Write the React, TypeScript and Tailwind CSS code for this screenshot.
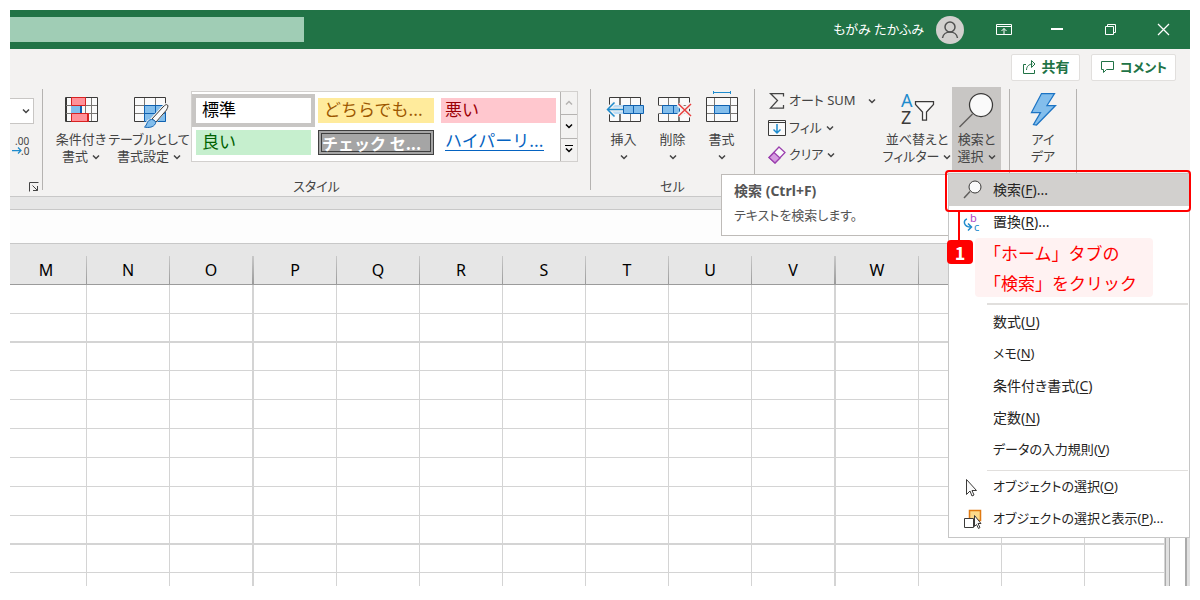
import React from 'react';
import clsx from 'clsx';

const COLUMNS = [
  { name: 'M', col: 'w-[77px]', thick: false },
  { name: 'N', col: 'w-[83px]', thick: false },
  { name: 'O', col: 'w-[84px]', thick: true },
  { name: 'P', col: 'w-[83px]', thick: false },
  { name: 'Q', col: 'w-[83px]', thick: false },
  { name: 'R', col: 'w-[83px]', thick: false },
  { name: 'S', col: 'w-[83px]', thick: false },
  { name: 'T', col: 'w-[83px]', thick: false },
  { name: 'U', col: 'w-[83px]', thick: false },
  { name: 'V', col: 'w-[84px]', thick: true },
  { name: 'W', col: 'w-[83px]', thick: false },
  { name: '', col: 'w-[83px]', thick: false },
  { name: '', col: 'w-[83px]', thick: false },
  { name: '', col: '', thick: false },
];

const ROWS = [
  { height: 'h-[29px]', thick: false },
  { height: 'h-[29px]', thick: true },
  { height: 'h-[28px]', thick: false },
  { height: 'h-[29px]', thick: false },
  { height: 'h-[29px]', thick: false },
  { height: 'h-[29px]', thick: false },
  { height: 'h-[29px]', thick: false },
  { height: 'h-[29px]', thick: false },
  { height: 'h-[29px]', thick: true },
  { height: 'h-[28px]', thick: false },
  { height: 'h-[29px]', thick: false },
];

function Chevron({ className }: { className?: string }) {
  return (
    <svg className={clsx('inline-block h-2 w-2 shrink-0', className)} viewBox="0 0 8 8" fill="none" stroke="currentColor" strokeWidth="1.5">
      <path d="M1 2.5 4 5.5 7 2.5" />
    </svg>
  );
}

function Separator() {
  return <div className="mt-1 mb-1.5 w-px shrink-0 bg-[#b5b3b1]" />;
}

function GroupLabel({ children }: { children?: React.ReactNode }) {
  return <div className="text-center text-[13px] leading-5">{children}</div>;
}

interface RibbonButtonProps {
  icon: React.ReactNode;
  first: string;
  second?: string;
  arrow?: boolean;
  className?: string;
}

function RibbonButton({ icon, first, second, arrow = true, className }: RibbonButtonProps) {
  return (
    <button className={clsx('flex h-[84px] shrink-0 flex-col items-center text-[13px] leading-[17px] whitespace-nowrap', className)}>
      <svg className="h-11 w-11 shrink-0" viewBox="0 0 44 44" fill="none">
        {icon}
      </svg>
      <span>{first}</span>
      <span className="flex h-[17px] items-center gap-1">
        {second}
        {arrow && <Chevron />}
      </span>
    </button>
  );
}

const conditionalIcon = (
  <>
    <path d="M6.5 10.5h32v24h-32z" fill="#fafafa" stroke="#3b3a39" />
    <path d="M7.5 10v25" stroke="#3b3a39" />
    <path d="M7 18.5h31M7 26.5h31M26.5 11v23M32.5 11v23" stroke="#797774" />
    <path d="M12.5 10.5h14v8h-14z" fill="#ff9199" stroke="#d92121" />
    <path d="M12.5 26.5h17v8h-17z" fill="#ff9199" stroke="#d92121" />
    <path d="M12 19h10v7H12z" fill="#83beec" />
    <path d="M22 19v7" stroke="#0f61b0" strokeWidth="2" />
    <path d="M29 27v7" stroke="#d92121" strokeWidth="2" />
  </>
);

const tableIcon = (
  <>
    <path d="M7.5 10.5h31v24h-31z" fill="#fafafa" stroke="#3b3a39" />
    <path d="M17 18h22v17H17z" fill="#83beec" />
    <path d="M8 18.5h30M8 26.5h10M17.5 11v24M28.5 11v8" stroke="#797774" />
    <path d="M17.5 34.5v-16h21v16zM28.5 18v16M18 26.5h20" stroke="#0f61b0" />
    <path d="M40 16c2 1 2 4 0 7L30 35c-2 5-7 7-14 6 2-2 2-8 7-9L36 18c2-2 3-2 4-2z" fill="#f3f2f1" />
    <path d="M40.5 18c1 1 0 3-1 5L29 35l-4-3 11-12c2-2 3.5-3 4.5-2z" fill="#fafafa" stroke="#3b3a39" />
    <path d="M24.5 32.5c2 0 5 2 4 4-2 4-7 4.5-11 3.5 3-2 2-7 7-7.5z" fill="#83beec" stroke="#0f61b0" />
  </>
);

const insertIcon = (
  <>
    <path d="M7.5 10.5h31v24h-31z" fill="#fafafa" stroke="#3b3a39" />
    <path d="M18 11v23" stroke="#797774" strokeWidth="2" />
    <path d="M28.5 11v23" stroke="#797774" />
    <path d="M8 18h14v9H8z" fill="#bcdcf5" />
    <path d="M21.5 18.5h20v8h-20zM31.5 18v8" fill="#83beec" stroke="#0f61b0" />
    <path d="M5.5 22.5H21M12.5 15.5l-7 7 7 7" stroke="#f3f2f1" strokeWidth="4" />
    <path d="M5.5 22.5H21M12.5 15.5l-7 7 7 7" stroke="#1e8bcd" strokeWidth="1.5" />
  </>
);

const deleteIcon = (
  <>
    <path d="M7.5 18.5v-8h31v24h-31v-8" fill="#fafafa" stroke="#3b3a39" />
    <path d="M7 19h5v7H7z" fill="#f3f2f1" />
    <path d="M8 18.5h30M8 26.5h30M17.5 11v7M17.5 27v7" stroke="#797774" />
    <path d="M28 11v23" stroke="#797774" strokeWidth="2" />
    <path d="M11.5 18.5h17v8h-17zM22.5 18v8" fill="#83beec" stroke="#0f61b0" />
    <path d="M27.5 17l12.5 12M40 17 27.5 29" stroke="#f3f2f1" strokeWidth="5" />
    <path d="M27.5 17l12.5 12M40 17 27.5 29" stroke="#e8403f" strokeWidth="1.5" />
  </>
);

const formatIcon = (
  <>
    <path d="M6.5 10.5h31v24h-31z" fill="#fafafa" stroke="#3b3a39" />
    <path d="M7 18.5h30M7 26.5h30M14.5 11v23M30.5 11v23" stroke="#797774" />
    <path d="M14.5 18.5h15v8h-15z" fill="#83beec" stroke="#0f61b0" />
    <path d="M13.5 5.5h17M13.5 4v3M30.5 4v3" stroke="#1e8bcd" />
  </>
);

const sortIcon = (
  <>
    <text x="6" y="20" fontSize="18" fill="#1e8bcd">A</text>
    <text x="6" y="37" fontSize="18" fill="#3b3a39">Z</text>
    <path d="M20.5 14.5h18v3l-7 7.5v8h-4v-8l-7-7.5z" fill="#fafafa" stroke="#3b3a39" strokeWidth="1.25" />
  </>
);

const searchIcon = (
  <>
    <path d="M17.5 27 4.5 40" stroke="#605e5c" strokeWidth="1.5" />
    <circle cx="26" cy="18" r="11.5" fill="#fafafa" stroke="#3b3a39" strokeWidth="1.25" />
  </>
);

const ideaIcon = <path d="M20.5 6.5h13L26 18.5h8.5L15.500 38l-3-.5L19.500 25.500h-9z" fill="#83beec" stroke="#1c74c4" strokeWidth="1.25" />;

interface MenuItemProps {
  label: string;
  accessKey: string;
  more?: boolean;
  active?: boolean;
  compact?: boolean;
  icon?: React.ReactNode;
}

function MenuItem({ label, accessKey, more, active, compact, icon }: MenuItemProps) {
  return (
    <button
      role="menuitem"
      className={clsx(
        'flex h-8 w-full items-center pl-3 text-left whitespace-nowrap text-[#252423]',
        compact ? 'text-[13px]' : 'text-sm',
        active && 'bg-[#d2d0ce]'
      )}
    >
      <svg className="mr-3 h-5 w-5 shrink-0 overflow-visible" viewBox="0 0 20 20" fill="none">
        {icon}
      </svg>
      <span>
        {label}(<u className="underline-offset-2">{accessKey}</u>){more && '...'}
      </span>
    </button>
  );
}

function FindMenu() {
  return (
    <div role="menu" className="absolute top-[163px] right-0 w-[242px] border border-[#c6c6c6] bg-white pb-0.5">
      <MenuItem
        label="検索"
        accessKey="F"
        more
        active
        icon={
          <>
            <path d="M9 11.500 3 18" stroke="#605e5c" strokeWidth="1.5" />
            <circle cx="14" cy="7" r="6" fill="#fafafa" stroke="#3b3a39" />
          </>
        }
      />
      <MenuItem
        label="置換"
        accessKey="R"
        more
        icon={
          <>
            <text x="9" y="10" fontSize="11" fill="#b146c2">b</text>
            <text x="13" y="19" fontSize="11" fill="#1e8bcd">c</text>
            <path d="M6 7c-4 1-4 8 4 8M7 11.500l3.500 3.500L7 18.500" stroke="#1e8bcd" strokeWidth="1.5" />
          </>
        }
      />
      <div className="h-16" />
      <div className="mt-px mr-px ml-[38px] h-0.5 bg-[#e1dfdd]" />
      <div className="h-px" />
      <MenuItem label="数式" accessKey="U" />
      <MenuItem label="メモ" accessKey="N" compact />
      <MenuItem label="条件付き書式" accessKey="C" />
      <MenuItem label="定数" accessKey="N" />
      <MenuItem label="データの入力規則" accessKey="V" compact />
      <div className="mt-1 mr-px ml-[38px] h-px bg-[#e1dfdd]" />
      <MenuItem
        label="オブジェクトの選択"
        accessKey="O"
        compact
        icon={<path d="M5.500 2.500v15l3.500-3.500 2 5 2-1-2-4.500h4.500z" fill="#fafafa" stroke="#3b3a39" />}
      />
      <MenuItem
        label="オブジェクトの選択と表示"
        accessKey="P"
        more
        compact
        icon={
          <>
            <path d="M8.500 1.500h11v10h-11z" fill="#fcd98a" stroke="#e07a12" strokeWidth="1.5" />
            <path d="M3.500 9.500h9v9h-9z" fill="#fff" stroke="#3b3a39" />
            <path d="M13.500 6.500v11l2-2 2 4 1.500-1-2-4h3z" fill="#fafafa" stroke="#3b3a39" />
          </>
        }
      />
    </div>
  );
}

function TitleBar() {
  return (
    <header className="flex h-[39px] items-center bg-[#217346] text-white">
      <input aria-label="検索" className="h-[25px] w-[294px] bg-[#a0cdb5] outline-none" />
      <span className="ml-auto text-[13px]">もがみ たかふみ</span>
      <svg className="ml-3 h-7 w-7" viewBox="0 0 28 28" fill="none" stroke="#505050" strokeWidth="1.5">
        <circle cx="14" cy="14" r="14" fill="#d2d0ce" stroke="none" />
        <circle cx="14" cy="11" r="5" />
        <path d="M6.500 22c1-8 14-8 15 0" />
      </svg>
      <button aria-label="リボンの表示オプション" className="ml-8">
        <svg className="h-4 w-4" viewBox="0 0 16 16" fill="none" stroke="currentColor">
          <path d="M.5 2.500h15v10H.5zM.5 4.500h15M8 12V6.500M5.500 9 8 6.500 10.500 9" />
        </svg>
      </button>
      <button aria-label="最小化" className="ml-[37px]">
        <svg className="h-4 w-4" viewBox="0 0 16 16" fill="none" stroke="currentColor">
          <path d="M2 7h12" strokeWidth="2" />
        </svg>
      </button>
      <button aria-label="元に戻す" className="ml-[37px]">
        <svg className="h-4 w-4" viewBox="0 0 16 16" fill="none" stroke="currentColor">
          <path d="M3.500 4.500h8v8h-8zM5.500 4.500v-2h8v8h-2" />
        </svg>
      </button>
      <button aria-label="閉じる" className="mr-[19px] ml-[37px]">
        <svg className="h-4 w-4" viewBox="0 0 16 16" fill="none" stroke="currentColor" strokeWidth="1.25">
          <path d="m3 2 11 11M14 2 3 13" />
        </svg>
      </button>
    </header>
  );
}

function StyleGallery() {
  const cell = 'flex h-[25px] items-start overflow-hidden px-1.5 text-left leading-[22px] whitespace-nowrap';
  return (
    <div className="mt-1 ml-1 flex h-[71px] w-[387px] shrink-0 border border-[#d2d0ce] bg-white font-['Noto_Sans_CJK_JP',sans-serif] text-[17px] [font-feature-settings:normal]">
      <div className="grid grid-cols-[115px_116px_115px] content-start gap-[7px] pt-1.5 pl-1">
        <button className={clsx(cell, 'bg-white text-black ring-4 ring-[#c8c6c4]')}>標準</button>
        <button className={clsx(cell, 'bg-[#ffeb9c] text-[#9c5700]')}>どちらでも...</button>
        <button className={clsx(cell, 'bg-[#ffc7ce] pl-1 text-[#9c0006]')}>悪い</button>
        <button className={clsx(cell, 'bg-[#c6efce] text-[#006100]')}>良い</button>
        <button className="flex h-[25px] items-center border-4 border-double border-[#3f3f3f] bg-[#a5a5a5] text-base leading-4 font-bold whitespace-nowrap text-white">
          チェック セ...
        </button>
        <button className={clsx(cell, 'pl-1 text-[#0563c1]')}>
          <span className="border-b border-[#0563c1] leading-5">ハイパーリ...</span>
        </button>
      </div>
      <div className="ml-auto flex w-[17px] flex-col divide-y divide-[#b5b3b1] border-l border-[#b5b3b1] bg-[#f3f2f1] text-black">
        <button aria-label="上へ" className="flex flex-1 items-center justify-center text-[#b5b3b1]">
          <Chevron className="rotate-180" />
        </button>
        <button aria-label="下へ" className="flex flex-1 items-center justify-center">
          <Chevron />
        </button>
        <button aria-label="その他" className="flex flex-1 flex-col items-center justify-center">
          <span className="h-px w-2 bg-black" />
          <Chevron />
        </button>
      </div>
    </div>
  );
}

function SmallButton({ icon, label, gap }: { icon: React.ReactNode; label: string; gap?: boolean }) {
  return (
    <button className="flex h-[27px] items-center text-[13px] whitespace-nowrap">
      <svg className="mr-[3px] h-[18px] w-[18px] shrink-0" viewBox="0 0 18 18" fill="none">
        {icon}
      </svg>
      {label}
      <Chevron className={gap ? 'ml-3' : 'ml-1'} />
    </button>
  );
}

function Ribbon() {
  return (
    <div className="flex h-[111px] text-[#444]">
      <div className="flex w-8 shrink-0 flex-col">
        <div className="mt-[13px] flex h-[26px] w-6 items-center justify-end border border-l-0 border-[#c8c6c4] bg-white pr-[3px]">
          <Chevron />
        </div>
        <svg className="mt-2 h-7 w-6" viewBox="0 0 24 28" fill="none">
          <text x="5" y="13" fontSize="10" fill="#444">.00</text>
          <text x="11" y="23" fontSize="10" fill="#444">.0</text>
          <path d="M2 18.500h9M8 15.500l3 3-3 3" stroke="#1e8bcd" strokeWidth="1.25" />
        </svg>
        <svg className="mt-auto mr-[3px] mb-1 ml-auto h-2.5 w-2.5" viewBox="0 0 10 10" fill="none" stroke="#444">
          <path d="M.5 9.500v-9h9M3.500 3.500l5 5M8.500 4v4.500H4" />
        </svg>
      </div>
      <Separator />

      <div className="flex w-[547px] shrink-0 flex-col justify-between">
        <div className="mt-0.5 flex">
          <RibbonButton icon={conditionalIcon} first="条件付き" second="書式" className="ml-2 w-[60px]" />
          <RibbonButton icon={tableIcon} first="テーブルとして" second="書式設定" className="w-[76px]" />
          <StyleGallery />
        </div>
        <GroupLabel>スタイル</GroupLabel>
      </div>
      <Separator />

      <div className="flex w-[163px] shrink-0 flex-col justify-between">
        <div className="mt-0.5 flex pl-2">
          <RibbonButton icon={insertIcon} first="挿入" className="w-[49px]" />
          <RibbonButton icon={deleteIcon} first="削除" className="w-[49px]" />
          <RibbonButton icon={formatIcon} first="書式" className="w-[49px]" />
        </div>
        <GroupLabel>セル</GroupLabel>
      </div>
      <Separator />

      <div className="mt-0.5 flex w-[254px] shrink-0">
        <div className="ml-[13px] flex w-[112px] flex-col">
          <SmallButton
            gap
            label="オート SUM"
            icon={<path d="M15.500 4.500v-3h-13l7 7-7 7.500h13v-3" stroke="#444" strokeWidth="1.25" />}
          />
          <SmallButton
            label="フィル"
            icon={
              <>
                <path d="M.5 1.500h17v15H.5z" fill="#fafafa" stroke="#3b3a39" />
                <path d="M1 3.500h16" stroke="#3b3a39" />
                <path d="M9 5v9M5.500 10.500 9 14l3.500-3.500" stroke="#1e8bcd" strokeWidth="1.5" />
              </>
            }
          />
          <SmallButton
            label="クリア"
            icon={
              <>
                <path d="M11 1 17 6.500 7 17 1 11.500z" fill="#fafafa" stroke="#9b3fae" strokeWidth="1.25" />
                <path d="M6 6.500 12 12 7 17 1 11.500z" fill="#d59be0" stroke="#9b3fae" strokeWidth="1.25" />
              </>
            }
          />
        </div>
        <RibbonButton icon={sortIcon} first="並べ替えと" second="フィルター" className="ml-0.5 w-[70px]" />
        <RibbonButton icon={searchIcon} first="検索と" second="選択" className="w-[49px] bg-[#c8c6c4]" />
      </div>
      <Separator />

      <div className="mt-0.5 w-[66px] shrink-0">
        <RibbonButton icon={ideaIcon} first="アイ" second="デア" arrow={false} className="w-full" />
      </div>
      <Separator />
    </div>
  );
}

function Sheet() {
  return (
    <div className="flex min-h-0 flex-1 overflow-hidden">
      <table className="w-full table-fixed border-separate border-spacing-0 self-start">
        <colgroup>
          {COLUMNS.map((column, index) => (
            <col key={index} className={column.col} />
          ))}
        </colgroup>
        <thead>
          <tr className="h-[41px] bg-[#e6e6e6]">
            {COLUMNS.map((column, index) => (
              <th key={index} className="border-b border-[#9b9b9b] p-0 align-bottom text-base font-normal text-black">
                <div className="flex h-7 items-center">
                  <span className={clsx('flex-1', index === 0 && 'pr-1')}>{column.name}</span>
                  <span className={clsx('h-full bg-linear-to-b from-[#c8c8c8] to-[#9b9b9b]', column.thick ? 'w-0.5' : 'w-px')} />
                </div>
              </th>
            ))}
          </tr>
        </thead>
        <tbody>
          {ROWS.map((row, index) => (
            <tr key={index} className={row.height}>
              {COLUMNS.map((column, i) => (
                <td
                  key={i}
                  className={clsx('border-[#d4d4d4] p-0', row.thick ? 'border-b-2' : 'border-b', column.thick ? 'border-r-2' : 'border-r')}
                />
              ))}
            </tr>
          ))}
        </tbody>
      </table>
      <div className="w-[5px] shrink-0 border-x border-[#ababab] bg-[#e1e1e1]" />
      <div className="w-[15px] shrink-0 bg-white" />
      <div className="w-[5px] shrink-0 border-l-2 border-[#ababab] bg-[#e1e1e1]" />
    </div>
  );
}

export default function App() {
  return (
    <div className="h-screen overflow-hidden bg-white px-2.5 pt-2.5 pb-3.5 font-['Noto_Sans','Noto_Sans_CJK_JP',sans-serif] [font-feature-settings:'palt']">
      <div className="relative flex h-full flex-col bg-white">
        <TitleBar />

        <div className="bg-[#f3f2f1]">
          <div className="flex h-9 items-center justify-end gap-[11px] pr-3.5 text-sm font-bold text-[#217346]">
            <button className="flex h-[27px] w-[69px] items-center justify-center gap-1 rounded-xs border border-[#e1dfdd] bg-white">
              <svg className="h-4 w-4" viewBox="0 0 16 16" fill="none" stroke="currentColor">
                <path d="M4 5.500H1.500v9h11V11M4.500 11c0-4 3-6 6-6M9.500 1.500 13 5l-3.500 3.500z" />
              </svg>
              共有
            </button>
            <button className="flex h-[27px] w-[85px] items-center justify-center gap-1 rounded-xs border border-[#e1dfdd] bg-white text-[13px]">
              <svg className="h-4 w-4" viewBox="0 0 16 16" fill="none" stroke="currentColor">
                <path d="M1.500 2.500h12v8h-7l-3 3v-3h-2z" />
              </svg>
              コメント
            </button>
          </div>
          <Ribbon />
        </div>
        <div className="h-3.5 shrink-0 border-y border-[#c8c8c8] bg-[#e6e6e6]" />
        <div className="h-[34px] shrink-0 border-b border-[#c8c8c8] bg-[#fdfdfd]" />
        <Sheet />

        <div role="tooltip" className="absolute top-[164px] right-[240px] h-[62px] w-[229px] border border-[#bebbb8] bg-white px-3 pt-1 text-[#555]">
          <p className="text-sm leading-6 font-bold">検索 (Ctrl+F)</p>
          <p className="text-[13px] leading-6">テキストを検索します。</p>
        </div>
        <FindMenu />

        {/* callout for step 1 */}
        <div className="absolute top-40 -right-px h-[42px] w-[246px] rounded-sm border-2 border-[#ff0000]" />
        <div className="absolute top-[201px] right-[230px] h-[30px] w-0.5 bg-[#ff0000]" />
        <div className="absolute top-[228px] right-[37px] flex items-start font-['Noto_Sans_CJK_JP',sans-serif] [font-feature-settings:normal]">
          <span className="mt-0.5 mr-0.5 flex h-6 w-[26px] items-center justify-center rounded-sm bg-[#ff0000] text-lg font-bold text-white">1</span>
          <p className="h-[59px] w-[178px] rounded-sm bg-[#fff2f2] pl-[9px] text-[17px] leading-[30px] whitespace-nowrap text-[#ff0000]">
            「ホーム」タブの
            <br />
            「検索」をクリック
          </p>
        </div>
      </div>
    </div>
  );
}
